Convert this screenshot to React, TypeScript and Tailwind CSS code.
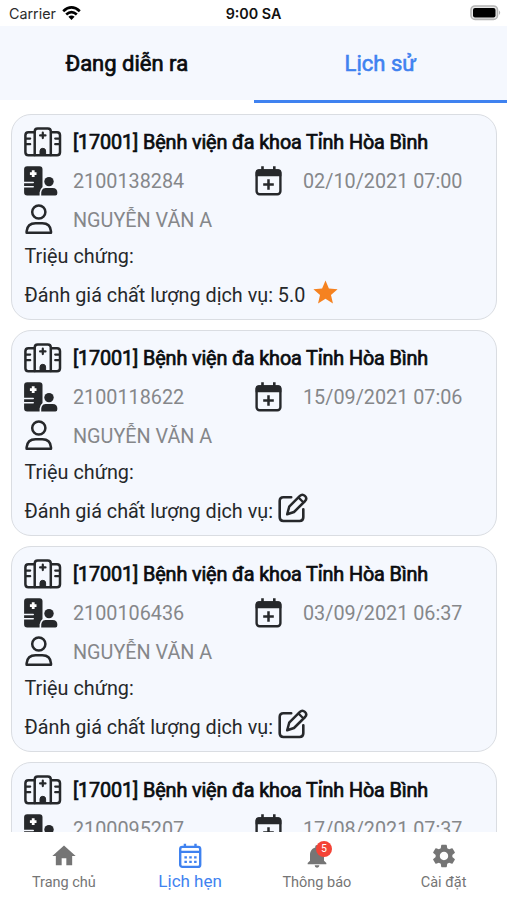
import { MdHome, MdNotifications, MdSettings, MdStar } from 'react-icons/md';

const appointments = [
  { id: '2100138284', date: '02/10/2021 07:00', rating: '5.0' },
  { id: '2100118622', date: '15/09/2021 07:06', rating: null },
  { id: '2100106436', date: '03/09/2021 06:37', rating: null },
  { id: '2100095207', date: '17/08/2021 07:37', rating: null },
];

function HospitalIcon() {
  return (
    <svg width="38" height="30" viewBox="0 0 38 30" fill="none" stroke="#26282b" strokeWidth="2.5" strokeLinecap="round" strokeLinejoin="round">
      <path d="M10.5 5.2H4.4Q1.4 5.2 1.4 8.2V25.2Q1.4 28.2 4.4 28.2H33Q36 28.2 36 25.2V8.2Q36 5.2 33 5.2H27.1" />
      <path d="M10.7 28V4.4Q10.7 1.4 13.7 1.4H23.8Q26.8 1.4 26.8 4.4V28" />
      <path d="M2 11.6H6.2M2 17.2H6.2M31.2 11.6H35.6M31.2 17.2H35.6" strokeWidth="2.2" />
      <path d="M18.8 5.7V11.1M16.1 8.4H21.5" strokeWidth="2.2" />
      <path d="M16 28V24Q16 21.3 18.8 21.3T21.6 24V28Z" fill="#26282b" strokeWidth="1" />
    </svg>
  );
}

function RecordIcon() {
  return (
    <svg width="35" height="30" viewBox="0 0 35 30">
      <path d="M3.2 .3H15.5Q18.5 .3 18.5 3.3V21Q16 23 15.6 26.3V29.5H3.2Q.1 29.5 .1 26.5V3.3Q.1 .3 3.2 .3Z" fill="#26282b" />
      <path d="M9.2 4.3V10.9M5.9 7.6H12.5" stroke="#fff" strokeWidth="2.8" />
      <path d="M0 16.5H9.2M0 20.8H9.2" stroke="#f5f8fe" strokeWidth="1.6" strokeLinecap="round" />
      <circle cx="25" cy="15.6" r="4.7" fill="#26282b" />
      <path d="M17.2 29.5Q16.6 22 21.5 22H28.6Q33.4 22 33.4 27Q33.4 29.5 31.4 29.5Z" fill="#26282b" />
    </svg>
  );
}

function PersonIcon() {
  return (
    <svg width="28" height="31" viewBox="0 0 28 31" fill="none" stroke="#26282b" strokeWidth="2.5" strokeLinejoin="round">
      <circle cx="13.8" cy="8" r="6.6" />
      <path d="M1.6 28.8V27.3Q2.4 19.3 10.6 19.3H17.3Q25.3 19.3 26 27.3V28.8Z" />
    </svg>
  );
}

function CalendarPlusIcon() {
  return (
    <svg width="27" height="30" viewBox="0 0 27 30" fill="none" stroke="#26282b">
      <rect x="1.6" y="4.5" width="23.8" height="23.8" rx="3" strokeWidth="2.4" />
      <path d="M.6 6.3Q.6 3.3 3.6 3.3H23.4Q26.4 3.3 26.4 6.3V10.2H.6Z" fill="#26282b" stroke="none" />
      <path d="M7.5 .3V5M19.3 .3V5" strokeWidth="2.6" />
      <path d="M13.5 13.2V23.8M8.2 18.5H18.8" strokeWidth="2.5" />
    </svg>
  );
}

function EditIcon() {
  return (
    <svg width="30" height="30" viewBox="0 0 30 30" fill="none" stroke="#26282b" strokeWidth="2.6" strokeLinecap="round" strokeLinejoin="round">
      <path d="M13.2 4.3H5.4Q1.7 4.3 1.7 8V24.3Q1.7 28 5.4 28H21.6Q25.3 28 25.3 24.3V16.2" />
      <path d="M11.2 13.7L21.9 2.9Q24.3 .5 26.9 2.9T27.1 8L16 19L9.2 21.3Z" strokeWidth="2.5" />
      <path d="M20.6 4.6L25.3 9.3" strokeWidth="2.2" />
    </svg>
  );
}

function CalendarIcon() {
  return (
    <svg width="24" height="26" viewBox="0 0 24 26" fill="none" stroke="#3f82f0" strokeWidth="2.4">
      <rect x="2.2" y="3.9" width="20" height="20" rx="2.2" />
      <path d="M2.2 8.9H22.2M6.9 .8V4M17.5 .8V4" />
      <path d="M6.4 14.3H18.6M6.4 18.9H18.6" strokeWidth="2.3" strokeDasharray="2.5 2.35" />
    </svg>
  );
}

function Card({ item }: { item: (typeof appointments)[number] }) {
  return (
    <div className="h-[206px] shrink-0 rounded-[20px] border border-[#dadde2] bg-[#f5f8fe] pl-[12.5px] pt-[7px] text-[19.8px] text-[#25282b]">
      <div className="flex h-[39px] items-center">
        <span className="w-[49px] shrink-0">
          <HospitalIcon />
        </span>
        <span className="mt-[2px] whitespace-nowrap tracking-[-0.12px] text-[#0a0c0f] [-webkit-text-stroke:0.7px_#0a0c0f]">
          [17001] Bệnh viện đa khoa Tỉnh Hòa Bình
        </span>
      </div>
      <div className="flex h-[39px] items-center text-[#85878a]">
        <span className="w-[49px] shrink-0">
          <RecordIcon />
        </span>
        <span className="mt-[2px] w-[182px]">{item.id}</span>
        <span className="w-[48px] shrink-0">
          <CalendarPlusIcon />
        </span>
        <span className="mt-[2px] whitespace-nowrap">{item.date}</span>
      </div>
      <div className="flex h-[39px] items-center text-[#85878a]">
        <span className="w-[49px] shrink-0 pl-px">
          <PersonIcon />
        </span>
        <span className="mt-[2px]">NGUYỄN VĂN A</span>
      </div>
      <div className="flex h-[34px] items-center pt-px pl-[0.5px]">Triệu chứng:</div>
      <div className="flex h-[42px] items-center pl-[0.5px]">
        <span className="mt-[3px] whitespace-nowrap">Đánh giá chất lượng dịch vụ:{item.rating && ` ${item.rating}`}</span>
        {item.rating ? (
          <MdStar size={29} className="mb-1 ml-1.5 text-[#f58220]" />
        ) : (
          <span className="mb-1 ml-[5px]">
            <EditIcon />
          </span>
        )}
      </div>
    </div>
  );
}

export default function App() {
  return (
    <div className="flex h-[900px] w-[507px] flex-col overflow-hidden bg-white font-[Roboto,sans-serif]">
      <div className="grid h-[26px] shrink-0 grid-cols-3 items-center font-[Inter,sans-serif] text-[14.3px]">
        <div className="flex items-center gap-1.5 pl-[9px] text-[#2b2b2b]">
          <span className="pt-px">Carrier</span>
          <svg width="19" height="15" viewBox="0 0 19 15" fill="none" stroke="#000" strokeWidth="2.7">
            <path d="M1.2 5.2Q9.5 -2.3 17.8 5.2M4.2 8.5Q9.5 3.7 14.8 8.5" />
            <path d="M6.4 10.8Q9.5 8 12.6 10.8L9.5 14Z" fill="#000" stroke="none" />
          </svg>
        </div>
        <div className="pt-0.5 text-center font-semibold text-[#111]">9:00 SA</div>
        <div className="flex items-center justify-end pr-[6px]">
          <svg width="31" height="16" viewBox="0 0 31 16">
            <rect x="1" y="1" width="26.5" height="13.4" rx="4" fill="#e8e8e8" stroke="#b4b4b4" strokeWidth="1.6" />
            <rect x="3" y="3" width="22.5" height="9.4" rx="2" fill="#000" />
            <path d="M29 5.5Q31.4 7.7 29 9.9Z" fill="#b4b4b4" />
          </svg>
        </div>
      </div>

      <div className="grid h-[77px] shrink-0 grid-cols-2 text-[22px]">
        <div className="mb-[3px] flex items-center justify-center bg-[#f5f8fe] text-[#0a0c0f] [-webkit-text-stroke:0.7px_#0a0c0f]">Đang diễn ra</div>
        <div className="flex items-center justify-center border-b-[3.5px] border-[#3f82f0] bg-[#f5f8fe] text-[#3f82f0] [-webkit-text-stroke:0.6px_#3f82f0]">Lịch sử</div>
      </div>

      <div className="flex min-h-0 flex-1 flex-col gap-[10px] overflow-hidden px-[10.5px] pt-[11px]">
        {appointments.map((item) => (
          <Card key={item.id} item={item} />
        ))}
      </div>

      <div className="grid h-[68px] shrink-0 grid-cols-4 bg-white text-[14.5px] leading-5 text-[#757575]">
        <div className="flex flex-col items-center pl-px pt-[10px]">
          <MdHome size={28} />
          <span className="mt-[3px]">Trang chủ</span>
        </div>
        <div className="flex flex-col items-center pt-[11px] text-[#3f82f0]">
          <CalendarIcon />
          <span className="text-[17px] leading-6">Lịch hẹn</span>
        </div>
        <div className="flex flex-col items-center pt-[10px]">
          <div className="relative">
            <MdNotifications size={28} />
            <span className="absolute -top-[1px] left-[13px] flex size-4 items-center justify-center rounded-full bg-[#f44336] text-[10.5px] leading-none text-white">5</span>
          </div>
          <span className="mt-[3px]">Thông báo</span>
        </div>
        <div className="flex flex-col items-center pt-[10px]">
          <MdSettings size={28} />
          <span className="mt-[3px]">Cài đặt</span>
        </div>
      </div>
    </div>
  );
}
